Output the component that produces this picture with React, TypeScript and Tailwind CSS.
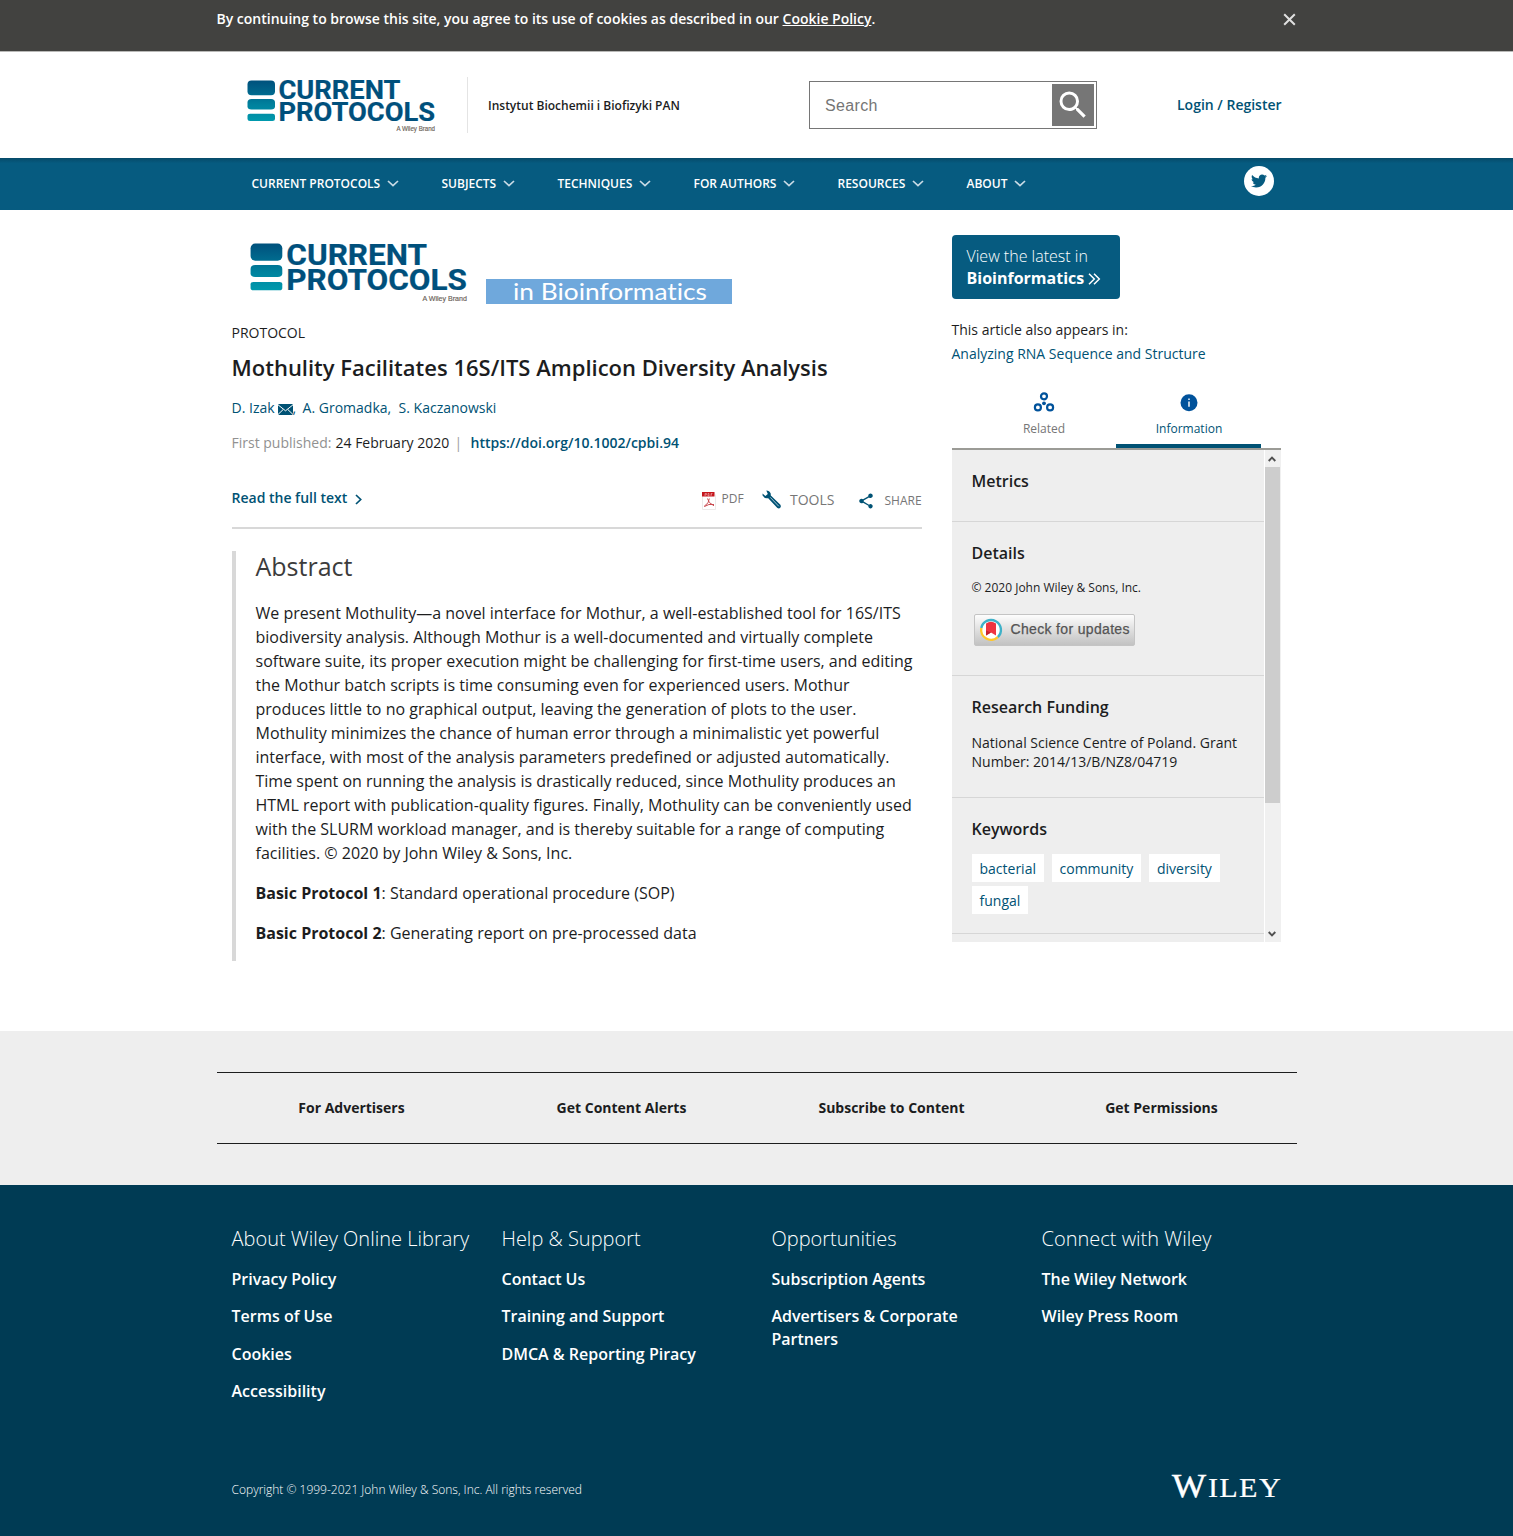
import React from 'react';
import { FaTwitter } from 'react-icons/fa';
import { MdSearch, MdShare } from 'react-icons/md';

const NAV = [
  { label: 'CURRENT PROTOCOLS', left: 'ml-[35px] w-[190px]', text: 'w-[129px]' },
  { label: 'SUBJECTS', left: 'w-[116px]', text: 'w-[55px]' },
  { label: 'TECHNIQUES', left: 'w-[136px]', text: 'w-[75px]' },
  { label: 'FOR AUTHORS', left: 'w-[144px]', text: 'w-[83px]' },
  { label: 'RESOURCES', left: 'w-[129px]', text: 'w-[68px]' },
  { label: 'ABOUT', left: 'w-[80px]', text: 'w-[41px]' },
];

const ABSTRACT = [
  'We present Mothulity—a novel interface for Mothur, a well-established tool for 16S/ITS',
  'biodiversity analysis. Although Mothur is a well-documented and virtually complete',
  'software suite, its proper execution might be challenging for first-time users, and editing',
  'the Mothur batch scripts is time consuming even for experienced users. Mothur',
  'produces little to no graphical output, leaving the generation of plots to the user.',
  'Mothulity minimizes the chance of human error through a minimalistic yet powerful',
  'interface, with most of the analysis parameters predefined or adjusted automatically.',
  'Time spent on running the analysis is drastically reduced, since Mothulity produces an',
  'HTML report with publication-quality figures. Finally, Mothulity can be conveniently used',
  'with the SLURM workload manager, and is thereby suitable for a range of computing',
  'facilities. © 2020 by John Wiley & Sons, Inc.',
];

const FOOTER = [
  { title: 'About Wiley Online Library', links: ['Privacy Policy', 'Terms of Use', 'Cookies', 'Accessibility'] },
  { title: 'Help & Support', links: ['Contact Us', 'Training and Support', 'DMCA & Reporting Piracy'] },
  { title: 'Opportunities', links: ['Subscription Agents', 'Advertisers & Corporate Partners'] },
  { title: 'Connect with Wiley', links: ['The Wiley Network', 'Wiley Press Room'] },
];

function Logo({ className, id }: { className: string; id: string }) {
  return (
    <svg viewBox="0 0 189 52" className={className} overflow="visible">
      <defs>
        <linearGradient id={id} gradientUnits="userSpaceOnUse" x1="0" y1="0" x2="0" y2="41">
          <stop offset="0" stopColor="#00507c" />
          <stop offset="0.35" stopColor="#006a8e" />
          <stop offset="0.6" stopColor="#00819d" />
          <stop offset="1" stopColor="#0099ad" />
        </linearGradient>
      </defs>
      <g fill={`url(#${id})`}>
        <rect x="0.5" y="0.5" width="27.5" height="14.8" rx="4" />
        <path d="M4.5 19h19.500q4 0 4 3.500v4q0 3-4 3H4.500q-4 0-4-3v-4q0-3.500 4-3.500Z" />
        <path d="M3 33.700h22.500q2.500 0 2.500 2v3.300q0 2-2.500 2H3q-2.500 0-2.500-2v-3.300q0-2 2.500-2Z" />
      </g>
      <g fill="#00507c" stroke="#00507c" strokeWidth="0.200" fontFamily="Roboto, 'Liberation Sans', sans-serif" fontWeight="700" fontSize="25.800">
        <text x="31.500" y="19.300" textLength="122" lengthAdjust="spacingAndGlyphs">CURRENT</text>
        <text x="31.500" y="41" textLength="156.500" lengthAdjust="spacingAndGlyphs">PROTOCOLS</text>
      </g>
      <text x="149.500" y="50.500" fill="#6b5f57" stroke="#6b5f57" strokeWidth="0.150" fontFamily="'Liberation Sans', Arial, sans-serif" fontSize="6.500" textLength="38.500" lengthAdjust="spacingAndGlyphs">A Wiley Brand</text>
    </svg>
  );
}

function Chevron() {
  return (
    <svg width="12" height="8" viewBox="0 0 12 8" className="-ml-[1.500px]" fill="none" stroke="#c9dbe5" strokeWidth="1.700">
      <path d="M1 1 6 5.700 11 1" />
    </svg>
  );
}

function Sidebar() {
  return (
    <aside className="ml-[30px] w-[329px] pt-[25px]">
      <div className="h-16 w-[168px] rounded-[4px] bg-[#065b80] pl-[15px] pt-[10px] text-base leading-[22px] text-white">
        <div className="whitespace-nowrap font-light">View the latest in</div>
        <div className="flex items-center gap-[4px] font-bold">
          <span>Bioinformatics</span>
          <svg width="13" height="12" viewBox="0 0 13 12" fill="none" stroke="white" strokeWidth="1.500" className="mt-[2px]">
            <path d="m1 .700 5.300 5.300L1 11.300M6 .700l5.300 5.300L6 11.300" />
          </svg>
        </div>
      </div>
      <div className="mt-[19px] whitespace-nowrap text-sm leading-6">
        <div className="text-[#1c1d1e]">This article also appears in:</div>
        <div className="text-[#005274]">Analyzing RNA Sequence and Structure</div>
      </div>
      <div className="mt-[22px] flex h-[60px] pl-[19px] text-xs">
        <div className="flex w-[145px] flex-col items-center pl-[2px] text-[#767676]">
          <svg width="22" height="20" viewBox="0 0 22 20" className="mt-[4px]" fill="none" stroke="#00529b" strokeWidth="2.200">
            <circle cx="11" cy="4.300" r="3" />
            <circle cx="4.900" cy="15.400" r="3" />
            <circle cx="17.100" cy="15.400" r="3" />
            <circle cx="11" cy="11.300" r="1.900" fill="#00529b" stroke="none" />
          </svg>
          <span className="mt-[9px] leading-4">Related</span>
        </div>
        <div className="flex w-[145px] flex-col items-center border-b-4 border-[#005274] pl-[2px] text-[#005274]">
          <svg width="18" height="18" viewBox="0 0 18 18" className="mt-[6px]">
            <circle cx="9" cy="8.700" r="8.500" fill="#00529b" />
            <path d="M8.200 7.500h1.600v5.200H8.200ZM8.200 4.500h1.600v1.600H8.200Z" fill="#e6eef6" />
          </svg>
          <span className="mt-[9px] leading-4">Information</span>
        </div>
      </div>
      <div className="flex h-[494px] border-t-2 border-[#9b9b96] bg-[#eee] text-[#1c1d1e]">
        <div className="h-[492px] w-[312px] overflow-hidden whitespace-nowrap">
          <section className="h-[72px] border-b border-[#d6d6d6] pl-5 pt-[19px]">
            <h3 className="text-base font-semibold leading-6">Metrics</h3>
          </section>
          <section className="h-[154px] border-b border-[#d6d6d6] pl-5 pt-[19px]">
            <h3 className="text-base font-semibold leading-6">Details</h3>
            <p className="mt-[13px] text-xs leading-5">© 2020 John Wiley & Sons, Inc.</p>
            <div className="ml-[2px] mt-[16px] flex h-[32px] w-[161px] items-center rounded-[2px] border border-[#c4c4c4] bg-linear-to-b from-[#fdfdfd] to-[#c2c2c2]">
              <svg width="159" height="30" viewBox="0 0 159 30" className="shrink-0">
                <circle cx="16" cy="15" r="9.800" fill="white" />
                <path d="M6.300 13A9.900 9.900 0 1 1 22.800 22.100" fill="none" stroke="#3eb1c8" strokeWidth="2.400" />
                <path d="M22.800 22.100A9.900 9.900 0 0 1 6.300 13" fill="none" stroke="#ffc72c" strokeWidth="2.400" />
                <path d="M11 8.500q5-3.500 10 0v12l-5-3-5 3Z" fill="#ef3340" />
                <path d="M11 20.500v-5l5 2Z" fill="#c3222e" />
                <text x="35.500" y="18.800" fill="#545454" stroke="#545454" strokeWidth="0.250" fontSize="14" fontFamily="'Liberation Sans', Arial, sans-serif" textLength="119" lengthAdjust="spacing">Check for updates</text>
              </svg>
            </div>
          </section>
          <section className="h-[122px] border-b border-[#d6d6d6] pl-5 pt-[19px]">
            <h3 className="text-base font-semibold leading-6">Research Funding</h3>
            <p className="mt-[14px] text-sm leading-[19px]">National Science Centre of Poland. Grant<br />Number: 2014/13/B/NZ8/04719</p>
          </section>
          <section className="h-[136px] border-b border-[#d6d6d6] pl-5 pt-[19px]">
            <h3 className="text-base font-semibold leading-6">Keywords</h3>
            <div className="mt-[13px] flex flex-wrap gap-x-2 gap-y-1 text-sm text-[#005274]">
              <span className="h-7 w-[72px] bg-white pl-2 leading-[30px]">bacterial</span>
              <span className="h-7 w-[89px] bg-white pl-2 leading-[30px]">community</span>
              <span className="h-7 w-[71px] bg-white pl-[8.500px] leading-[30px]">diversity</span>
              <span className="h-7 w-[56px] bg-white pl-2 leading-[30px]">fungal</span>
            </div>
          </section>
        </div>
        <div className="flex w-[17px] flex-col border-l border-white bg-[#f0f0f0]">
          <div className="flex h-[17px] w-[15px] items-center justify-center">
            <svg width="8" height="6" viewBox="0 0 8 6" fill="none" stroke="#505050" strokeWidth="1.900"><path d="M.700 5 4 1.700 7.300 5" /></svg>
          </div>
          <div className="h-[336px] w-[15px] bg-[#cdcdcd]" />
          <div className="mt-auto flex h-[17px] w-[15px] items-center justify-center">
            <svg width="8" height="6" viewBox="0 0 8 6" fill="none" stroke="#505050" strokeWidth="1.900"><path d="M.700 1 4 4.300 7.300 1" /></svg>
          </div>
        </div>
      </div>
    </aside>
  );
}

export default function App() {
  return (
    <div className="h-[1536px] w-[1513px] overflow-hidden bg-white font-['Open_Sans',sans-serif] text-[#1c1d1e]">
      <div className="h-[52px] border-b border-[#b9b9b7] bg-[#424240]">
        <div className="mx-auto flex w-[1080px] justify-between pt-[9px] text-sm font-semibold leading-5 text-white">
          <p className="whitespace-nowrap tracking-[-0.005px]">By continuing to browse this site, you agree to its use of cookies as described in our <span className="underline">Cookie Policy</span>.</p>
          <svg width="13" height="13" viewBox="0 0 13 13" className="mr-[1px] mt-[4px]" stroke="#e0e0e0" strokeWidth="2"><path d="m1.200 1.200 10.600 10.600M11.800 1.200 1.200 11.800" /></svg>
        </div>
      </div>

      <header className="mx-auto flex h-[106px] w-[1080px]">
        <Logo id="bars-header" className="ml-[30.500px] mt-[28px] h-[52px] w-[189px]" />
        <div className="ml-[31px] mt-[25px] h-14 w-px bg-[#e4e4e4]" />
        <p className="ml-[20px] mt-[44px] w-[192px] whitespace-nowrap text-xs font-semibold leading-5">Instytut Biochemii i Biofizyki PAN</p>
        <div className="ml-[129px] mt-[29px] flex h-12 w-[288px] justify-between border border-[#767676] p-[2px]">
          <span className="pl-[13px] font-['Liberation_Sans',sans-serif] text-base leading-[43px] tracking-[0.35px] text-[#757575]">Search</span>
          <span className="h-[42px] w-[42px] bg-[#767676]"><MdSearch className="ml-[3px] mt-[3px] h-[36px] w-[36px] text-white" /></span>
        </div>
        <p className="ml-[80px] mt-[43px] whitespace-nowrap text-sm font-semibold leading-5 text-[#005274]">Login / Register</p>
      </header>

      <nav className="h-[52px] bg-linear-to-b from-[#064a69] via-[#065b80] via-10% to-[#065b80]">
        <div className="mx-auto flex w-[1080px]">
          {NAV.map((n) => (
            <div key={n.label} className={`flex h-[51px] shrink-0 items-center gap-2 whitespace-nowrap text-xs font-semibold text-white ${n.left}`}>
              <span className={n.text}>{n.label}</span>
              <Chevron />
            </div>
          ))}
          <span className="ml-auto mr-[23px] mt-[8px] flex h-[30px] w-[30px] items-center justify-center rounded-full bg-white"><FaTwitter className="h-4 w-4 text-[#065b80]" /></span>
        </div>
      </nav>

      <main className="mx-auto flex h-[821px] w-[1080px] pl-[15px]">
        <article className="w-[690px]">
          <div className="flex">
            <Logo id="bars-journal" className="ml-[18px] mt-[33px] h-[60px] w-[218px]" />
            <div className="ml-[18.500px] mt-[69px] h-[25px] w-[246px] bg-[#6fa8dc]">
              <svg width="246" height="25" viewBox="0 0 246 25" overflow="visible"><text x="27" y="21" fill="white" fontFamily="Lato, sans-serif" fontSize="24" textLength="194" lengthAdjust="spacingAndGlyphs" className="[font-variant-ligatures:none]">in Bioinformatics</text></svg>
            </div>
          </div>
          <p className="mt-[19px] text-sm leading-5">PROTOCOL</p>
          <h1 className="mt-[9px] whitespace-nowrap text-[22px] font-semibold leading-[30px]">Mothulity Facilitates 16S/ITS Amplicon Diversity Analysis</h1>
          <p className="mt-[16px] flex whitespace-nowrap text-sm leading-5 text-[#005274]">
            <span>D. Izak</span>
            <svg width="15" height="11" viewBox="0 0 15 11" className="ml-[3px] mt-[6px]"><rect width="15" height="11" rx="1" fill="#005274" /><path d="m0 .800 7.500 6L15 .800M0 10.500l5.200-5M15 10.500l-5.200-5" fill="none" stroke="white" strokeWidth="1" /></svg>
            <span className="w-[10px]">,</span>
            <span className="w-[96px]">A. Gromadka,</span>
            <span>S. Kaczanowski</span>
          </p>
          <p className="mt-[15px] flex whitespace-nowrap text-sm leading-5">
            <span className="w-[104px] text-[#919191]">First published:</span>
            <span className="w-[119px]">24 February 2020</span>
            <span className="w-[16px] text-[#a0a0a0]">|</span>
            <span className="font-semibold text-[#005274]">https://doi.org/10.1002/cpbi.94</span>
          </p>
          <div className="mt-[25px] flex h-[51px] whitespace-nowrap border-b-2 border-[#d8d8d8] text-[#767676]">
            <span className="mt-[10px] text-sm font-semibold leading-5 text-[#005274]">Read the full text</span>
            <svg width="8" height="11" viewBox="0 0 8 11" className="ml-[8px] mt-[16px]" fill="none" stroke="#005274" strokeWidth="1.700"><path d="m1 1 4.700 4.500L1 10" /></svg>
            <svg width="14" height="18" viewBox="0 0 14 18" className="ml-auto mt-[14px]">
              <path d="M.500.500h10.500l2.500 2.500v14.500H.500Z" fill="white" stroke="#eceaea" />
              <rect width="12.500" height="4.500" fill="#c5161d" />
              <path d="M3 1.500v2.500M3 1.500h1.500v1.300H3M6 1.500v2.500h1V1.500ZM9 4V1.500h1.500M9 2.700h1" stroke="#f4b6b8" strokeWidth=".600" fill="none" />
              <path d="M5.500 6.500q.500 4.500 6.500 7.300M7.300 6.500Q7.500 11 2 14.500M2.500 14.500q4-3 9.500-2" fill="none" stroke="#c94a50" strokeWidth="1" />
            </svg>
            <span className="ml-[6px] mt-[11px] w-[40px] text-xs leading-5">PDF</span>
            <svg width="20" height="20" viewBox="0 0 20 20" className="mt-[12px]">
              <path d="M4.300.400Q7.500.500 8.700 3.400L8.800 5.600 18.400 14.800Q19.500 16.300 18.300 17.700 17 19 15.400 18L6.200 8.200Q2.500 9 .600 5.600L.500 3.600 3.400 5.900 5.800 4Z" fill="#005274" />
              <path d="m8.300 7.400 8.500 8.900" stroke="#b9d0dc" strokeWidth=".900" />
            </svg>
            <span className="ml-[8.500px] mt-[12px] w-[66px] text-sm leading-5">TOOLS</span>
            <MdShare className="ml-[0.500px] mt-[13.500px] h-[18px] w-[18px] text-[#005274]" />
            <span className="ml-[10px] mt-[13px] w-[37px] text-xs leading-5">SHARE</span>
          </div>
          <section className="mt-[22px] h-[410px] whitespace-nowrap border-l-4 border-[#d8d8d8] pl-5 text-base leading-6">
            <h2 className="text-[25px] leading-[30px] text-[#3c3c3c]">Abstract</h2>
            <p className="mt-5">{ABSTRACT.map((l) => <span key={l} className="block">{l}</span>)}</p>
            <p className="mt-4"><b>Basic Protocol 1</b>: Standard operational procedure (SOP)</p>
            <p className="mt-4"><b>Basic Protocol 2</b>: Generating report on pre-processed data</p>
          </section>
        </article>
        <Sidebar />
      </main>

      <div className="h-[154px] bg-[#eee] pt-[41px]">
        <div className="mx-auto grid h-[72px] w-[1080px] grid-cols-4 border-y border-[#1c1d1e] text-center text-sm font-bold leading-[70px]">
          <span>For Advertisers</span>
          <span>Get Content Alerts</span>
          <span>Subscribe to Content</span>
          <span>Get Permissions</span>
        </div>
      </div>

      <footer className="h-[351px] bg-[#003b54] pt-[39px] text-white">
        <div className="mx-auto grid h-[231px] w-[1080px] grid-cols-4">
          {FOOTER.map((c) => (
            <div key={c.title} className="pl-[15px]">
              <h3 className="whitespace-nowrap text-xl font-light leading-[30px]">{c.title}</h3>
              <ul className="mt-[13.600px] w-[240px] text-base font-semibold leading-[23px]">
                {c.links.map((l) => <li key={l} className="mb-[14.500px] max-w-[215px]">{l}</li>)}
              </ul>
            </div>
          ))}
        </div>
        <div className="mx-auto flex w-[1080px] justify-between pl-[15px] pr-[15px]">
          <p className="mt-[25px] whitespace-nowrap text-xs font-light leading-5">Copyright © 1999-2021 John Wiley & Sons, Inc. All rights reserved</p>
          <svg width="110" height="24" viewBox="0 0 110 24" className="mt-[19px]" overflow="visible" fill="white" fontFamily="'Liberation Serif', serif">
            <text x="0" y="22.500" fontSize="34" textLength="34" lengthAdjust="spacingAndGlyphs" stroke="white" strokeWidth=".500">W</text>
            <text x="36" y="22.500" fontSize="27.500" textLength="74" lengthAdjust="spacingAndGlyphs" letterSpacing="1.200" stroke="white" strokeWidth=".200">ILEY</text>
          </svg>
        </div>
      </footer>
    </div>
  );
}
